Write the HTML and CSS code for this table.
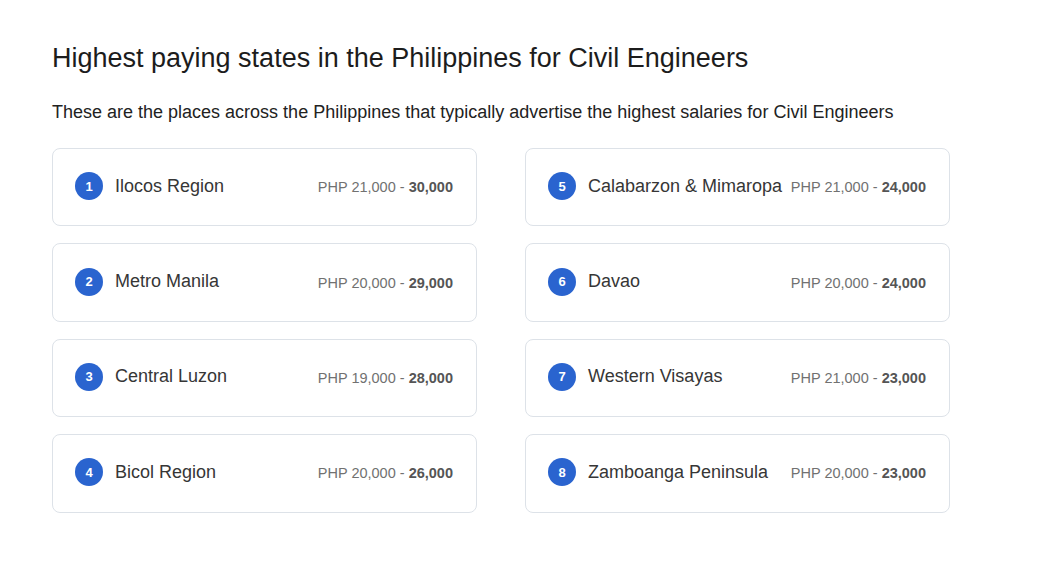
FILE: index.html
```html
<!DOCTYPE html>
<html>
<head>
<meta charset="utf-8">
<link rel="stylesheet" href="styles.css">
</head>
<body>
<main class="page">
  <h1 class="title">Highest paying states in the Philippines for Civil Engineers</h1>
  <p class="subtitle">These are the places across the Philippines that typically advertise the highest salaries for Civil Engineers</p>
  <div class="grid">
    <div class="col">
      <div class="card"><span class="num">1</span><span class="name">Ilocos Region</span><span class="pay">PHP 21,000 - <b>30,000</b></span></div>
      <div class="card"><span class="num">2</span><span class="name">Metro Manila</span><span class="pay">PHP 20,000 - <b>29,000</b></span></div>
      <div class="card"><span class="num">3</span><span class="name">Central Luzon</span><span class="pay">PHP 19,000 - <b>28,000</b></span></div>
      <div class="card"><span class="num">4</span><span class="name">Bicol Region</span><span class="pay">PHP 20,000 - <b>26,000</b></span></div>
    </div>
    <div class="col">
      <div class="card"><span class="num">5</span><span class="name">Calabarzon &amp; Mimaropa</span><span class="pay">PHP 21,000 - <b>24,000</b></span></div>
      <div class="card"><span class="num">6</span><span class="name">Davao</span><span class="pay">PHP 20,000 - <b>24,000</b></span></div>
      <div class="card"><span class="num">7</span><span class="name">Western Visayas</span><span class="pay">PHP 21,000 - <b>23,000</b></span></div>
      <div class="card"><span class="num">8</span><span class="name">Zamboanga Peninsula</span><span class="pay">PHP 20,000 - <b>23,000</b></span></div>
    </div>
  </div>
</main>
</body>
</html>
```
FILE: styles.css
```css
* { box-sizing: border-box; }
html, body { margin: 0; padding: 0; background: #fff; }
body { font-family: "Liberation Sans", Arial, sans-serif; color: #1f1f1f; }
.page { padding: 40px 52px 0 52px; width: 1000px; }
.title { font-size: 27px; font-weight: 400; margin: 0; line-height: 36px; color: #1c1c1c; }
.subtitle { font-size: 18px; margin: 24px 0 0 0; line-height: 24px; color: #222; }
.grid { display: grid; grid-template-columns: 425px 425px; column-gap: 48px; margin-top: 24px; }
.col { display: flex; flex-direction: column; gap: 17px; }
.card { height: 78.4px; border: 1px solid #dde2e8; border-radius: 8px; display: flex; align-items: center; padding: 0 23px 2px 22px; }
.num { width: 28px; height: 28px; border-radius: 50%; background: #2a64cf; color: #fff; font-weight: 700; font-size: 13px; display: flex; align-items: center; justify-content: center; flex: none; }
.name { margin-left: 12px; font-size: 18px; color: #363636; flex: 1; white-space: nowrap; }
.pay { font-size: 14.5px; color: #717171; white-space: nowrap; padding-top: 2px; }
.pay b { color: #555; font-weight: 700; }
```
